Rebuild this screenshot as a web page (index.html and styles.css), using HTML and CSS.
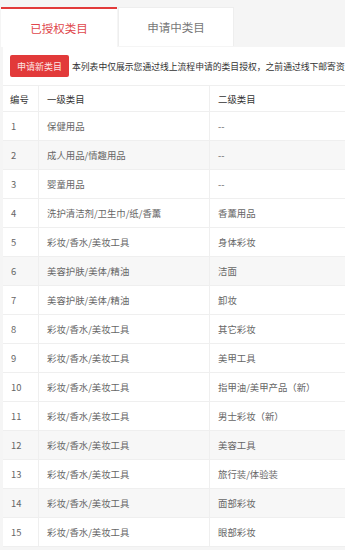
FILE: index.html
```html
<!DOCTYPE html>
<html lang="zh-CN">
<head>
  <meta charset="UTF-8">
  <title>类目管理</title>
  <link rel="stylesheet" href="styles.css">
</head>
<body>

  <!-- Tabs -->
  <div class="tabs">
    <div class="tab active">已授权类目</div>
    <div class="tab">申请中类目</div>
  </div>

  <!-- Panel -->
  <div class="panel">
    <div class="toolbar">
      <button class="apply-btn">申请新类目</button>
      <span class="tip">本列表中仅展示您通过线上流程申请的类目授权，之前通过线下邮寄资质</span>
    </div>

    <table class="cat-table">
      <colgroup>
        <col class="c-no">
        <col class="c-first">
        <col>
      </colgroup>
      <thead>
        <tr><th>编号</th><th>一级类目</th><th>二级类目</th></tr>
      </thead>
      <tbody>
        <tr><td>1</td><td>保健用品</td><td>--</td></tr>
        <tr class="shade"><td>2</td><td>成人用品/情趣用品</td><td>--</td></tr>
        <tr><td>3</td><td>婴童用品</td><td>--</td></tr>
        <tr><td>4</td><td>洗护清洁剂/卫生巾/纸/香薰</td><td>香薰用品</td></tr>
        <tr><td>5</td><td>彩妆/香水/美妆工具</td><td>身体彩妆</td></tr>
        <tr class="shade"><td>6</td><td>美容护肤/美体/精油</td><td>洁面</td></tr>
        <tr><td>7</td><td>美容护肤/美体/精油</td><td>卸妆</td></tr>
        <tr><td>8</td><td>彩妆/香水/美妆工具</td><td>其它彩妆</td></tr>
        <tr><td>9</td><td>彩妆/香水/美妆工具</td><td>美甲工具</td></tr>
        <tr><td>10</td><td>彩妆/香水/美妆工具</td><td>指甲油/美甲产品（新）</td></tr>
        <tr><td>11</td><td>彩妆/香水/美妆工具</td><td>男士彩妆（新）</td></tr>
        <tr class="shade"><td>12</td><td>彩妆/香水/美妆工具</td><td>美容工具</td></tr>
        <tr><td>13</td><td>彩妆/香水/美妆工具</td><td>旅行装/体验装</td></tr>
        <tr class="shade"><td>14</td><td>彩妆/香水/美妆工具</td><td>面部彩妆</td></tr>
        <tr><td>15</td><td>彩妆/香水/美妆工具</td><td>眼部彩妆</td></tr>
      </tbody>
    </table>
  </div>

</body>
</html>
```

FILE: styles.css
```css
* {
  box-sizing: border-box;
}
html, body {
  overflow: hidden;
}
body {
  margin: 0;
  background: #f5f5f5;
  font-family: "Noto Sans CJK SC", sans-serif;
  color: #666;
}

/* Tabs */
.tabs {
  display: flex;
  gap: 1px;
  padding: 7px 0 0 1px;
}
.tab {
  width: 116px;
  height: 39px;
  background: #fff;
  border: 1px solid #eee;
  border-bottom: none;
  font-size: 11.5px;
  color: #777;
  display: flex;
  align-items: center;
  justify-content: center;
}
.tab.active {
  height: 40px;
  border: none;
  border-top: 2px solid #e23a3a;
  color: #e0474c;
}

/* Panel */
.panel {
  margin-left: 3px;
  background: #fff;
  padding-top: 8px;
  width: 600px;
}
.toolbar {
  display: flex;
  align-items: center;
  padding-left: 7px;
  white-space: nowrap;
}
.apply-btn {
  width: 59px;
  height: 22px;
  border: none;
  border-radius: 2px;
  background: #e23a3a;
  color: #fde6e6;
  font-family: inherit;
  font-size: 9px;
  padding: 0;
  cursor: pointer;
}
.tip {
  margin-left: 3px;
  font-size: 8.8px;
  color: #333;
}

/* Table */
.cat-table {
  margin-top: 8px;
  width: 100%;
  table-layout: fixed;
  border-collapse: separate;
  border-spacing: 0;
  font-size: 9.4px;
}
.c-no {
  width: 35px;
}
.c-first {
  width: 171px;
}
.cat-table th,
.cat-table td {
  text-align: left;
  font-weight: normal;
  padding: 0 0 0 7px;
  border-bottom: 1px solid #efefef;
  white-space: nowrap;
}
.cat-table th {
  height: 27px;
  border-top: 1px solid #efefef;
  color: #333;
}
.cat-table td {
  height: 29px;
}
.cat-table th + th,
.cat-table td + td {
  border-left: 1px solid #efefef;
  padding-left: 8px;
}
.cat-table td:first-child {
  padding-left: 8px;
}
.shade td {
  background: #f7f7f7;
}
```
